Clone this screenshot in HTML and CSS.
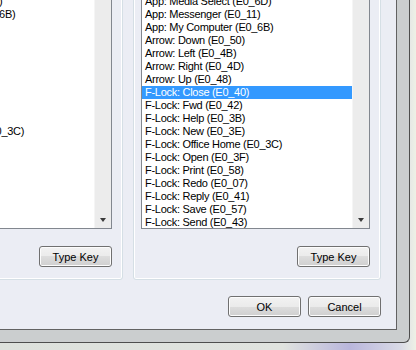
FILE: index.html
```html
<!DOCTYPE html>
<html>
<head>
<meta charset="UTF-8">
<title>Keyboard Key Mapping</title>
<link rel="stylesheet" href="styles.css">
</head>
<body>
<div class="screen">
  <div class="window">
    <div class="client">
      <div class="groups">
        <div class="group">
          <div class="list">
            <div class="rows">
              <div class="row">App: Media Select (E0_6D)</div>
              <div class="row">App: Messenger (E0_11)</div>
              <div class="row">App: My Computer (E0_6B)</div>
              <div class="row">Arrow: Down (E0_50)</div>
              <div class="row">Arrow: Left (E0_4B)</div>
              <div class="row">Arrow: Right (E0_4D)</div>
              <div class="row">Arrow: Up (E0_48)</div>
              <div class="row">F-Lock: Close (E0_40)</div>
              <div class="row">F-Lock: Fwd (E0_42)</div>
              <div class="row">F-Lock: Help (E0_3B)</div>
              <div class="row">F-Lock: New (E0_3E)</div>
              <div class="row">F-Lock: Office Home (E0_3C)</div>
              <div class="row">F-Lock: Open (E0_3F)</div>
              <div class="row">F-Lock: Print (E0_58)</div>
              <div class="row">F-Lock: Redo (E0_07)</div>
              <div class="row">F-Lock: Reply (E0_41)</div>
              <div class="row">F-Lock: Save (E0_57)</div>
              <div class="row">F-Lock: Send (E0_43)</div>
              <div class="row">F-Lock: Spell (E0_23)</div>
              <div class="row">F-Lock: Undo (E0_08)</div>
            </div>
            <div class="scrollbar"><div class="scroll-btn"><span class="arrow"></span></div></div>
          </div>
          <div class="actions"><button class="btn">Type Key</button></div>
        </div>
        <div class="group">
          <div class="list">
            <div class="rows">
              <div class="row">App: Mail (E0_6C)</div>
              <div class="row">App: Media Select (E0_6D)</div>
              <div class="row">App: Messenger (E0_11)</div>
              <div class="row">App: My Computer (E0_6B)</div>
              <div class="row">Arrow: Down (E0_50)</div>
              <div class="row">Arrow: Left (E0_4B)</div>
              <div class="row">Arrow: Right (E0_4D)</div>
              <div class="row">Arrow: Up (E0_48)</div>
              <div class="row selected">F-Lock: Close (E0_40)</div>
              <div class="row">F-Lock: Fwd (E0_42)</div>
              <div class="row">F-Lock: Help (E0_3B)</div>
              <div class="row">F-Lock: New (E0_3E)</div>
              <div class="row">F-Lock: Office Home (E0_3C)</div>
              <div class="row">F-Lock: Open (E0_3F)</div>
              <div class="row">F-Lock: Print (E0_58)</div>
              <div class="row">F-Lock: Redo (E0_07)</div>
              <div class="row">F-Lock: Reply (E0_41)</div>
              <div class="row">F-Lock: Save (E0_57)</div>
              <div class="row">F-Lock: Send (E0_43)</div>
              <div class="row">F-Lock: Spell (E0_23)</div>
              <div class="row">F-Lock: Undo (E0_08)</div>
            </div>
            <div class="scrollbar"><div class="scroll-btn"><span class="arrow"></span></div></div>
          </div>
          <div class="actions"><button class="btn">Type Key</button></div>
        </div>
      </div>
      <div class="footer">
        <button class="btn">OK</button>
        <button class="btn">Cancel</button>
      </div>
    </div>
  </div>
</div>
</body>
</html>
```

FILE: styles.css
```css
body{margin:0;font-family:"Liberation Sans",Arial,sans-serif;font-size:11px;color:#000}
.screen{width:416px;height:350px;overflow:hidden;background:linear-gradient(to right,#dde1dc 0%,#e0e3df 68%,#b9b6dc 84%,#d8d9e6 96%,#eef1e6 100%)}
.window{margin-left:-136px;margin-top:-48px;width:546px;box-sizing:border-box;padding:0 12px 12px 0;background:#cbcecf;border-right:1px solid #4e4e4e;border-bottom:1px solid #4e4e4e;border-bottom-right-radius:6px}
.client{background:#ebedf4;padding:10px 15px 12px 11px;border-right:1px solid #626262;border-bottom:1px solid #626262}
.groups{display:flex;gap:10px}
.group{width:248px;box-sizing:border-box;border:1px solid #d5dfe5;border-radius:3px;box-shadow:inset 0 0 0 1px #fff;padding:18px 10px 12px 7px}
.list{display:flex;height:248px;box-sizing:border-box;border:1px solid #82878f;background:#fff}
.rows{flex:1;overflow:hidden}
.row{height:13px;line-height:13px;padding-left:3px;white-space:nowrap;letter-spacing:-0.28px}
.row.selected{background:#3399ff;color:#fff}
.scrollbar{width:17px;background:#ececec;border-left:1px solid #f5f5f5;box-sizing:border-box;display:flex;flex-direction:column;justify-content:flex-end}
.scroll-btn{height:17px;display:flex;align-items:center;justify-content:center}
.arrow{width:0;height:0;border-left:3.5px solid transparent;border-right:3.5px solid transparent;border-top:4px solid #3a3a3a}
.actions{display:flex;justify-content:flex-end;margin-top:17px}
.btn{width:73px;height:21px;padding:0;border:1px solid #707070;border-radius:3px;background:linear-gradient(#f2f2f2,#ebebeb 50%,#dddddd 50%,#cfcfcf);box-shadow:inset 0 0 0 1px #fcfcfc;font-family:"Liberation Sans",Arial,sans-serif;font-size:11px;color:#000}
.footer{display:flex;justify-content:flex-end;gap:7px;margin-top:16px}
```
